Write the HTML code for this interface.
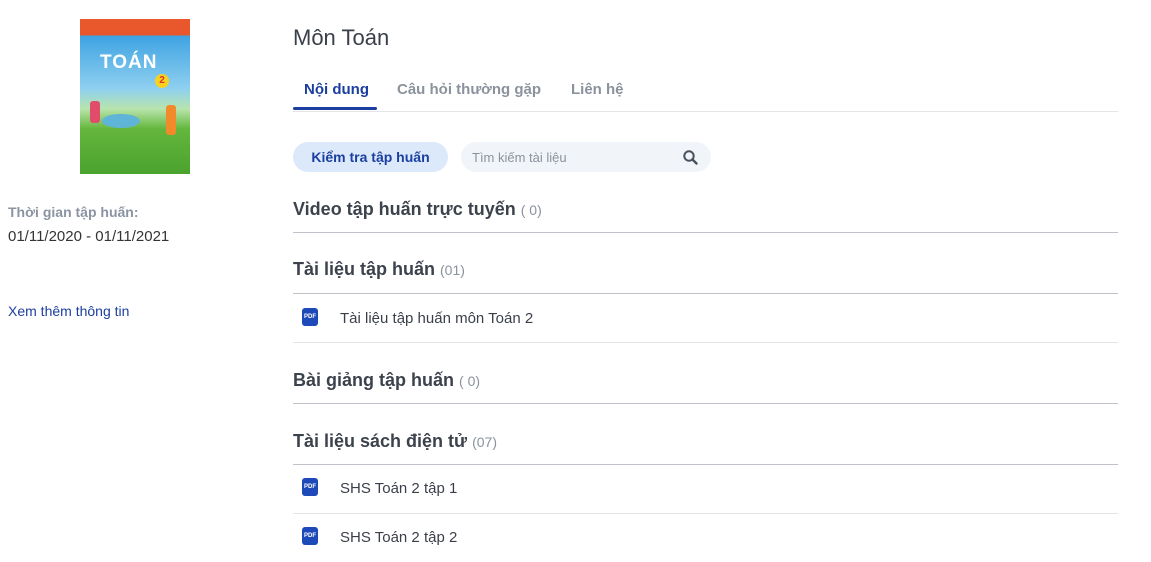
<!DOCTYPE html>
<html><head><meta charset="utf-8"><style>
*{margin:0;padding:0;box-sizing:border-box}
body{width:1151px;height:562px;background:#fff;font-family:"Liberation Sans",sans-serif;position:relative;overflow:hidden;color:#3a3f4a}
.a{position:absolute;white-space:nowrap}
.line{position:absolute;left:293px;width:825px;height:1px;background:#bfc3c9}
.lt{background:#e3e5e8}
.h{font-size:18px;font-weight:bold;color:#3d434d}
.h span{font-size:14px;font-weight:normal;color:#8a929c}
.pdf{position:absolute;left:302px;width:16px;height:18px;background:#1e49b8;border-radius:3px;color:#fff;font-size:6px;font-weight:bold;text-align:center;line-height:18px}
.it{font-size:15px;color:#3a3f4a}
</style></head><body>
<div class="a" style="left:80px;top:19px;width:110px;height:155px;background:linear-gradient(#e9582c 0,#e9582c 16px,#3fa3e2 17px,#8fd0f0 70px,#b8e4ac 90px,#64b63c 110px,#4aa32e 155px)">
<div class="a" style="left:20px;top:33px;font-size:19px;font-weight:bold;color:#fff;letter-spacing:1px">TOÁN</div>
<div class="a" style="left:75px;top:55px;width:14px;height:14px;border-radius:50%;background:#f7d21e;color:#d33;font-size:10px;font-weight:bold;text-align:center;line-height:14px">2</div>
<div class="a" style="left:22px;top:95px;width:38px;height:14px;border-radius:50%;background:#5fb5d8"></div>
<div class="a" style="left:86px;top:86px;width:10px;height:30px;background:#f28a2c;border-radius:3px"></div>
<div class="a" style="left:10px;top:82px;width:10px;height:22px;background:#e04c6a;border-radius:3px"></div>
</div>
<div class="a" style="left:8px;top:204px;font-size:14px;font-weight:bold;color:#8a94a3">Thời gian tập huấn:</div>
<div class="a" style="left:8px;top:228px;font-size:15px;color:#333">01/11/2020 - 01/11/2021</div>
<div class="a" style="left:8px;top:303px;font-size:14px;color:#1b3fa0">Xem thêm thông tin</div>

<div class="a" style="left:293px;top:25px;font-size:22px;color:#3a3f4a">Môn Toán</div>
<div class="a" style="left:304px;top:81px;font-size:15px;font-weight:bold;color:#1b3fa0">Nội dung</div>
<div class="a" style="left:397px;top:81px;font-size:15px;font-weight:bold;color:#8a929c">Câu hỏi thường gặp</div>
<div class="a" style="left:571px;top:81px;font-size:15px;font-weight:bold;color:#8a929c">Liên hệ</div>
<div class="line lt" style="top:111px"></div>
<div class="a" style="left:293px;top:107px;width:84px;height:3px;background:#1b3fa0;border-radius:2px"></div>

<div class="a" style="left:293px;top:142px;width:155px;height:30px;border-radius:15px;background:#dce9fb;color:#1b3fa0;font-size:14px;font-weight:bold;text-align:center;line-height:31px">Kiểm tra tập huấn</div>
<div class="a" style="left:461px;top:142px;width:250px;height:30px;border-radius:15px;background:#f1f4f9;color:#8a929c;font-size:13px;line-height:31px;padding-left:11px">Tìm kiếm tài liệu
<svg style="position:absolute;left:222px;top:8px" width="15" height="15" viewBox="0 0 15 15"><circle cx="6" cy="6" r="4.7" fill="none" stroke="#4a5260" stroke-width="2"/><path d="M9.5 9.5L13.5 13.5" stroke="#4a5260" stroke-width="2.4" stroke-linecap="round"/></svg></div>

<div class="a h" style="left:293px;top:199px">Video tập huấn trực tuyến <span>( 0)</span></div>
<div class="line" style="top:232px"></div>
<div class="a h" style="left:293px;top:259px">Tài liệu tập huấn <span>(01)</span></div>
<div class="line" style="top:293px"></div>
<div class="pdf" style="top:308px">PDF</div>
<div class="a it" style="left:340px;top:310px">Tài liệu tập huấn môn Toán 2</div>
<div class="line lt" style="top:342px"></div>
<div class="a h" style="left:293px;top:370px">Bài giảng tập huấn <span>( 0)</span></div>
<div class="line" style="top:403px"></div>
<div class="a h" style="left:293px;top:431px">Tài liệu sách điện tử <span>(07)</span></div>
<div class="line" style="top:464px"></div>
<div class="pdf" style="top:478px">PDF</div>
<div class="a it" style="left:340px;top:480px">SHS Toán 2 tập 1</div>
<div class="line lt" style="top:513px"></div>
<div class="pdf" style="top:527px">PDF</div>
<div class="a it" style="left:340px;top:529px">SHS Toán 2 tập 2</div>
</body></html>
